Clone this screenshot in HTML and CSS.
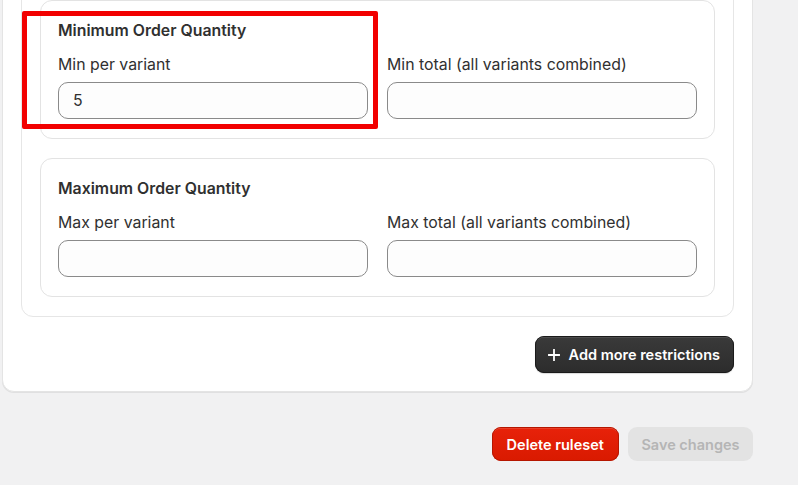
FILE: index.html
```html
<!DOCTYPE html>
<html lang="en">
<head>
<meta charset="utf-8">
<title>Order quantity rules</title>
<link rel="stylesheet" href="styles.css">
</head>
<body>
<div class="page">
  <div class="card outer">
    <div class="card inner">
      <section class="group">
        <div class="annot"></div>
        <h3 class="group-title">Minimum Order Quantity</h3>
        <div class="fields">
          <label class="field">
            <span class="field-label">Min per variant</span>
            <input class="input" type="text" value="5">
          </label>
          <label class="field">
            <span class="field-label">Min total (all variants combined)</span>
            <input class="input" type="text" value="">
          </label>
        </div>
      </section>
      <section class="group">
        <h3 class="group-title">Maximum Order Quantity</h3>
        <div class="fields">
          <label class="field">
            <span class="field-label">Max per variant</span>
            <input class="input" type="text" value="">
          </label>
          <label class="field">
            <span class="field-label">Max total (all variants combined)</span>
            <input class="input" type="text" value="">
          </label>
        </div>
      </section>
    </div>
    <div class="actions">
      <button class="btn btn-dark" type="button">
        <svg class="plus" viewBox="0 0 12 12" width="12" height="12" aria-hidden="true"><path d="M6 0.5v11M0.5 6h11" stroke="#fff" stroke-width="1.8" stroke-linecap="round" fill="none"/></svg>
        <span>Add more restrictions</span>
      </button>
    </div>
  </div>
  <div class="footer">
    <button class="btn btn-danger" type="button">Delete ruleset</button>
    <button class="btn btn-disabled" type="button" disabled>Save changes</button>
  </div>
</div>
</body>
</html>
```
FILE: styles.css
```css
* { box-sizing: border-box; }
html, body { margin: 0; padding: 0; }
body {
  background: #f1f1f2;
  font-family: Inter, "Noto Sans", "Liberation Sans", sans-serif;
  color: #303030;
  font-size: 15.85px;
  line-height: 20px;
  overflow: hidden;
}
.page {
  width: 753px;
  padding-left: 2px;
  margin-top: -38px;
}
.card {
  background: #fff;
  border: 1px solid #e3e3e3;
  border-radius: 12px;
}
.outer {
  padding: 18px;
  display: flex;
  flex-direction: column;
  gap: 19px;
  border-color: #e4e4e4;
  box-shadow: 0 1px 0 rgba(26, 26, 26, 0.08);
}
.inner {
  padding: 18px 18px 19px;
  display: flex;
  flex-direction: column;
  gap: 19px;
  border-color: #e6e6e6;
}
.group {
  position: relative;
  border: 1px solid #e3e3e3;
  border-radius: 12px;
  padding: 20px 17px 19px;
  background: #fff;
}
.group-title {
  margin: 0 0 14px;
  font-size: 15.85px;
  line-height: 20px;
  font-weight: 600;
}
.fields {
  display: grid;
  grid-template-columns: 1fr 1fr;
  gap: 19px;
}
.field {
  display: flex;
  flex-direction: column;
  gap: 7px;
}
.field-label {
  font-size: 15.85px;
  line-height: 20px;
}
.input {
  height: 37px;
  width: 100%;
  border: 1px solid #8a8a8a;
  border-radius: 10px;
  background: #fdfdfd;
  padding: 0 14px;
  font: inherit;
  color: #303030;
}
.annot {
  position: absolute;
  left: -19px;
  top: 10px;
  width: 356px;
  height: 118px;
  border: 5px solid #f20000;
  border-radius: 2px;
  pointer-events: none;
}
.actions {
  display: flex;
  justify-content: flex-end;
}
.btn {
  font-family: Inter, "Noto Sans", "Liberation Sans", sans-serif;
  font-weight: 600;
  font-size: 14.5px;
  border: 0;
  border-radius: 9px;
  display: inline-flex;
  align-items: center;
  justify-content: center;
  gap: 9px;
}
.btn-dark {
  height: 37px;
  padding: 0 14px 0 13px;
  color: #fff;
  background: linear-gradient(180deg, #3a3a3a 0%, #2c2c2c 100%);
  box-shadow: inset 0 0 0 1px #1a1a1a, inset 0 1.5px 0 rgba(255, 255, 255, 0.2), 0 1px 1px rgba(0,0,0,0.15);
}
.plus { display: block; }
.footer {
  margin-top: 35px;
  display: flex;
  justify-content: flex-end;
  gap: 9px;
}
.btn-danger {
  height: 34px;
  padding: 0 15px;
  color: #fff;
  background: linear-gradient(180deg, #e8220a 0%, #d91a00 100%);
  box-shadow: inset 0 0 0 1px #b51600, inset 0 1.5px 0 rgba(255, 255, 255, 0.25);
}
.btn-disabled {
  height: 34px;
  padding: 0 13.5px;
  color: #b5b5b5;
  background: #e3e3e3;
}
```
